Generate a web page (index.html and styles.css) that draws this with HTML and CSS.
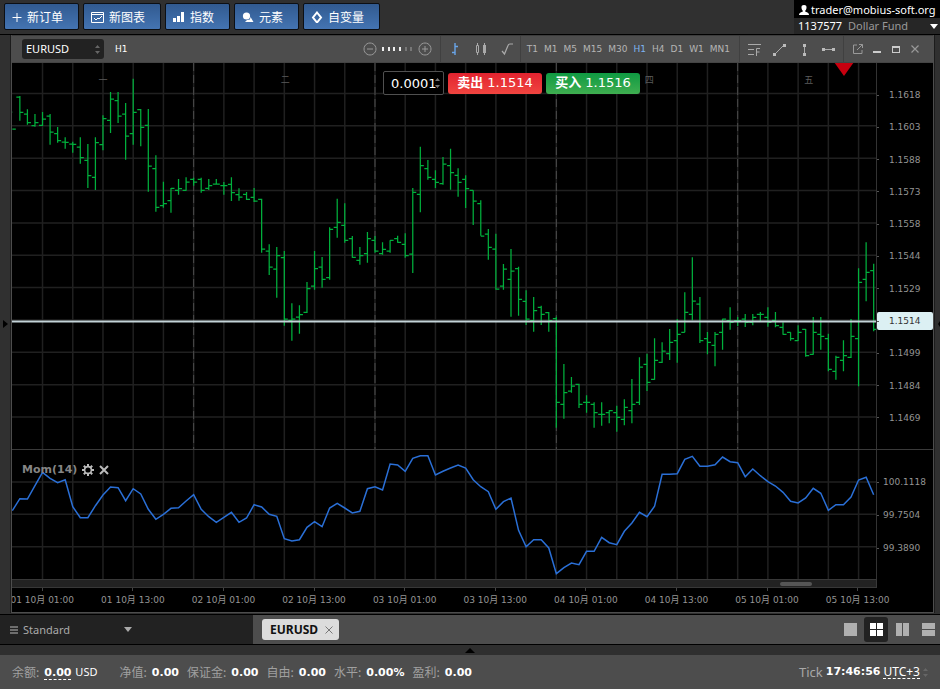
FILE: index.html
```html
<!DOCTYPE html>
<html lang="zh-CN">
<head>
<meta charset="utf-8">
<title>EURUSD H1</title>
<link rel="stylesheet" href="styles.css">
</head>
<body>
<header class="topbar">
  <nav class="actions">
    <button class="action"><svg width="10" height="12" viewBox="0 0 10 12"><path d="M5 2v9M0.500 6.500h9" stroke="#fff" fill="none"/></svg>新订单</button>
    <button class="action"><svg width="13" height="12" viewBox="0 0 13 12"><path d="M.5 1.500h12v10H.5zM.5 3.500h12M3 7l2 2 2-2 1 1 3-3" stroke="#fff" fill="none"/></svg>新图表</button>
    <button class="action"><svg width="12" height="12" viewBox="0 0 12 12"><path d="M0 7h3v4H0zM4 5h3v6H4zM8 1h3v10H8z" fill="#fff"/></svg>指数</button>
    <button class="action"><svg width="12" height="12" viewBox="0 0 12 12"><circle cx="4.500" cy="5" r="3.600" fill="#fff"/><path d="M8.500 6l3 5H3l2-2 3-.5z" fill="#fff"/></svg>元素</button>
    <button class="action"><svg width="12" height="12" viewBox="0 0 12 12"><path d="M6 1.500l4 5-4 5-4-5z" stroke="#fff" stroke-width="2" fill="none"/></svg>自变量</button>
  </nav>
  <div class="account">
    <div class="account-user"><svg width="10" height="10" viewBox="0 0 10 10"><path d="M5 0c2 0 2.800 1.200 2.500 3C7.300 4.500 6.500 5.500 6 6c0 1 4 1 4 4H0c0-3 4-3 4-4C3.500 5.500 2.700 4.500 2.500 3 2.200 1.200 3 0 5 0z" fill="#fff"/></svg><span>trader@mobius-soft.org</span></div>
    <button class="account-fund"><span class="account-id">1137577</span><span class="fund-name">Dollar Fund</span><svg width="8" height="5" viewBox="0 0 8 5"><path d="M0 0h8L4 5z" fill="#fff"/></svg></button>
  </div>
</header>

<main class="workspace">
  <button class="rail rail-left" aria-label="展开左侧面板"><svg width="5" height="8" viewBox="0 0 5 8"><path d="M0 0l5 4-5 4z" fill="#000"/></svg></button>
  <section class="window">
    <div class="toolbar">
      <span class="pick"><select class="symbol" aria-label="品种"><option>EURUSD</option></select><svg width="5" height="9" viewBox="0 0 5 9"><path d="M0 3l2.500-3L5 3zM0 6h5L2.500 9z" fill="#666"/></svg></span>
      <span class="period">H1</span>
      <div class="group group-zoom">
        <button class="tool" aria-label="缩小"><svg width="14" height="14" viewBox="0 0 14 14"><path d="M7 1a6 6 0 1 0 .010 0zM4 7h6" stroke="#999" fill="none"/></svg></button>
        <svg width="31" height="5" viewBox="0 0 31 5"><path d="M0 0h2v4H0zM6 0h2v4H6zM11 0h2v4h-2zM17 0h2v4h-2z" fill="#eee"/><path d="M23 0h2v4h-2zM28 0h2v4h-2z" fill="#777"/></svg>
        <button class="tool" aria-label="放大"><svg width="14" height="14" viewBox="0 0 14 14"><path d="M7 1a6 6 0 1 0 .010 0zM4 7h6M7 4v6" stroke="#999" fill="none"/></svg></button>
      </div>
      <div class="group group-type">
        <button class="tool" aria-label="柱状图"><svg width="14" height="14" viewBox="0 0 14 14"><path d="M7 1v12M4 10.500h3M7 4.500h3" stroke="#69a5e8" stroke-width="1.400" fill="none"/></svg></button>
        <button class="tool" aria-label="蜡烛图"><svg width="14" height="14" viewBox="0 0 14 14"><path d="M3.500 1v12M10.500 1v12" stroke="#aaa"/><path d="M2.500 3.500h2v7h-2z" stroke="#aaa" fill="#4d4d4d"/><path d="M9 3h3v8H9z" fill="#aaa"/></svg></button>
        <button class="tool" aria-label="折线图"><svg width="14" height="14" viewBox="0 0 14 14"><path d="M2 9l2.500 3L8 3.500Q8.500 2 10 2h3" stroke="#aaa" stroke-width="1.200" fill="none"/></svg></button>
      </div>
      <div class="group group-frames">
        <button class="frame">T1</button><button class="frame">M1</button><button class="frame">M5</button><button class="frame">M15</button><button class="frame">M30</button><button class="frame frame-on">H1</button><button class="frame">H4</button><button class="frame">D1</button><button class="frame">W1</button><button class="frame">MN1</button>
      </div>
      <div class="group group-draw">
        <button class="tool" aria-label="斐波那契"><svg width="14" height="14" viewBox="0 0 14 14"><path d="M1 2.500h13M1 7.500h6M1 12.500h6M9.500 14V6.500H13M9.500 10h3" stroke="#aaa" fill="none"/></svg></button>
        <button class="tool" aria-label="趋势线"><svg width="14" height="14" viewBox="0 0 14 14"><path d="M3 12L12 3" stroke="#aaa"/><path d="M1 11h3v3H1zM11 2h3v3h-3z" fill="#bbb"/></svg></button>
        <button class="tool" aria-label="垂直线"><svg width="14" height="14" viewBox="0 0 14 14"><path d="M7.500 3v10" stroke="#aaa"/><path d="M6 2h3v3H6zM6 11h3v3H6z" fill="#bbb"/></svg></button>
        <button class="tool" aria-label="水平线"><svg width="14" height="14" viewBox="0 0 14 14"><path d="M2 7.500h10" stroke="#aaa"/><path d="M0 6h3v3H0zM10 6h3v3h-3z" fill="#bbb"/></svg></button>
      </div>
      <div class="group group-window">
        <button class="tool" aria-label="弹出"><svg width="12" height="12" viewBox="0 0 12 12"><path d="M5 2H1.500v8.500H10V7M7 1.500h3.500V5M5 7l5.500-5.500" stroke="#999" fill="none"/></svg></button>
        <button class="tool" aria-label="最小化"><svg width="12" height="12" viewBox="0 0 12 12"><path d="M2 8h8v2H2z" fill="#ccc"/></svg></button>
        <button class="tool" aria-label="最大化"><svg width="12" height="12" viewBox="0 0 12 12"><path d="M2 3h8v7H2zM3 5v4h6V5z" fill="#ccc" fill-rule="evenodd"/></svg></button>
        <button class="tool" aria-label="关闭"><svg width="12" height="12" viewBox="0 0 12 12"><path d="M2.500 2.500l7 7M9.500 2.500l-7 7" stroke="#999" stroke-width="1.200"/></svg></button>
      </div>
    </div>

    <div class="chart">
      <div class="pane pane-price">
        <svg id="price" class="plot" viewBox="12 63 864 386" preserveAspectRatio="none"></svg>
        <ul class="scale">
          <li>1.1618</li><li>1.1603</li><li>1.1588</li><li>1.1573</li><li>1.1558</li><li>1.1544</li><li>1.1529</li><li class="last">1.1514</li><li>1.1499</li><li>1.1484</li><li>1.1469</li>
        </ul>
        <ol class="weekdays"><li>一</li><li>二</li><li></li><li>四</li><li>五</li></ol>
        <form class="ticket">
          <span class="volume"><input type="text" value="0.0001" aria-label="交易量"><svg width="5" height="10" viewBox="0 0 5 10"><path d="M0 3l2.500-3L5 3zM0 7h5l-2.500 3z" fill="#777"/></svg></span>
          <button type="button" class="deal sell"><b>卖出</b> 1.1514</button>
          <button type="button" class="deal buy"><b>买入</b> 1.1516</button>
        </form>
        <svg class="marker" width="20" height="14" viewBox="0 0 20 14"><path d="M0 0h20L10 14z" fill="#c8000f"/></svg>
      </div>
      <div class="pane pane-momentum">
        <svg id="momentum" class="plot" viewBox="12 450 864 129" preserveAspectRatio="none"></svg>
        <ul class="scale scale-wide"><li>100.1118</li><li>99.7504</li><li>99.3890</li></ul>
        <div class="indicator">
          <span>Mom(14)</span>
          <button class="tool" aria-label="设置"><svg width="12" height="12" viewBox="0 0 12 12"><circle cx="6" cy="6" r="3.400" stroke="#bbb" stroke-width="1.600" fill="none"/><path d="M6 0v2.500M6 9.500V12M0 6h2.500M9.500 6H12M1.800 1.800l1.700 1.700M8.500 8.500l1.700 1.700M10.200 1.800L8.500 3.500M3.500 8.500l-1.700 1.700" stroke="#bbb" stroke-width="2"/></svg></button>
          <button class="tool" aria-label="移除"><svg width="10" height="10" viewBox="0 0 10 10"><path d="M1 1l8 8M9 1L1 9" stroke="#bbb" stroke-width="2"/></svg></button>
        </div>
      </div>
      <div class="scroll"><span class="thumb"></span></div>
      <div class="timeline">
        <ol class="times"><li>01 10月 01:00</li><li>01 10月 13:00</li><li>02 10月 01:00</li><li>02 10月 13:00</li><li>03 10月 01:00</li><li>03 10月 13:00</li><li>04 10月 01:00</li><li>04 10月 13:00</li><li>05 10月 01:00</li><li>05 10月 13:00</li></ol>
      </div>
    </div>
  </section>
  <button class="rail rail-right" aria-label="展开右侧面板"><svg width="2" height="6" viewBox="0 0 2 6"><path d="M2 0v6L0 3z" fill="#000"/></svg></button>
</main>

<div class="tabs">
  <div class="layout">
    <svg width="8" height="8" viewBox="0 0 8 8"><path d="M0 1h8M0 4h8M0 7h8" stroke="#888" stroke-width="1.500"/></svg>
    <span class="pick layout-pick"><select aria-label="布局"><option>Standard</option></select><svg width="8" height="5" viewBox="0 0 8 5"><path d="M0 0h8L4 5z" fill="#aaa"/></svg></span>
  </div>
  <div class="tab"><b>EURUSD</b><button class="tool" aria-label="关闭标签"><svg width="8" height="8" viewBox="0 0 8 8"><path d="M.5.5l7 7M7.500.5l-7 7" stroke="#777"/></svg></button></div>
  <div class="tiling">
    <button aria-label="单窗口"><svg width="13" height="13" viewBox="0 0 13 13"><path d="M0 0h13v13H0z" fill="#b0b0b0"/></svg></button>
    <button class="on" aria-label="四宫格"><svg width="13" height="13" viewBox="0 0 13 13"><path d="M0 0h6v6H0zM7 0h6v6H7zM0 7h6v6H0zM7 7h6v6H7z" fill="#fff"/></svg></button>
    <button aria-label="垂直排列"><svg width="13" height="13" viewBox="0 0 13 13"><path d="M0 0h6v13H0zM7 0h6v13H7z" fill="#b0b0b0"/></svg></button>
    <button aria-label="水平排列"><svg width="13" height="13" viewBox="0 0 13 13"><path d="M0 0h13v6H0zM0 7h13v6H0z" fill="#b0b0b0"/></svg></button>
  </div>
</div>
<button class="splitter" aria-label="展开底部面板"><svg width="10" height="5" viewBox="0 0 10 5"><path d="M5 0l5 5H0z" fill="#000"/></svg></button>
<footer class="status">
  <dl class="totals">
    <div class="balance"><dt>余额:</dt><dd><b class="dashed">0.00</b> <span class="currency">USD</span></dd></div>
    <div><dt>净值:</dt><dd><b>0.00</b></dd></div>
    <div><dt>保证金:</dt><dd><b>0.00</b></dd></div>
    <div><dt>自由:</dt><dd><b>0.00</b></dd></div>
    <div><dt>水平:</dt><dd><b>0.00%</b></dd></div>
    <div><dt>盈利:</dt><dd><b>0.00</b></dd></div>
  </dl>
  <div class="clock"><span class="tick">Tick</span><b>17:46:56</b><button class="zone dashed">UTC+3</button><svg width="5" height="9" viewBox="0 0 5 9"><path d="M0 3l2.500-3L5 3zM0 6h5L2.500 9z" fill="#666"/></svg></div>
</footer>
<script src="chart.js"></script>
</body>
</html>
```
FILE: styles.css
```css
* { box-sizing: border-box; }
html, body { height: 100%; }
body {
  margin: 0;
  display: flex;
  flex-direction: column;
  background: #303030;
  color: #fff;
  font: 11px/14px "Noto Sans", "Noto Sans CJK SC", sans-serif;
  overflow: hidden;
}
button, input, select { font: inherit; color: inherit; margin: 0; padding: 0; border: 0; background: none; }
button { cursor: pointer; }
ul, ol, dl, dd { margin: 0; padding: 0; list-style: none; }
svg { display: block; flex: none; }

/* Top bar */
.topbar { flex: none; display: flex; justify-content: space-between; height: 35px; border-bottom: 1px solid #000; background: #303030; }
.actions { display: flex; gap: 4px; padding: 3px 4px 4px; }
.action {
  display: flex; align-items: center; gap: 5px; height: 27px; padding: 0 15px 0 7px;
  border: 1px solid #0c0f14; border-radius: 2px;
  background: linear-gradient(#315a90, #4474b2);
  font: 12px/16px "Noto Sans CJK SC", sans-serif;
}
.account { width: 146px; padding-top: 2px; background: #000; white-space: nowrap; }
.account-user { display: flex; align-items: center; gap: 2px; height: 16px; padding-left: 5px; }
.account-fund { display: flex; align-items: center; width: 100%; height: 16px; padding: 0 2px 0 4px; background: #262626; }
.fund-name { margin-left: 6px; margin-right: auto; color: #999; }

/* Workspace */
.workspace { flex: 1; min-height: 0; display: flex; padding-bottom: 1px; }
.rail { flex: none; display: flex; align-items: center; background: #303030; }
.rail-left { width: 11px; padding-left: 3px; border-right: 1px solid #1c1c1c; }
.rail-right { width: 6px; justify-content: flex-end; border-left: 1px solid #1c1c1c; }
.window { flex: 1; min-width: 0; display: flex; flex-direction: column; border: 1px solid #4d4d4d; border-top: 0; background: #000; }
.toolbar { flex: none; display: flex; align-items: center; height: 28px; padding-left: 10px; background: #4d4d4d; border-top: 1px solid #3c3c3c; border-bottom: 1px solid #444; }
.pick { position: relative; display: flex; align-items: center; }
.pick select { width: 100%; appearance: none; }
.pick svg { position: absolute; right: 4px; pointer-events: none; }
.symbol { height: 20px; padding: 0 4px; border-radius: 3px; background: #222; }
.toolbar .pick { width: 82px; }
.period { margin-left: 11px; font: 9px/14px "DejaVu Sans", sans-serif; }
.group { display: flex; align-items: center; height: 26px; border-left: 1px solid #404040; }
.tool { display: flex; align-items: center; justify-content: center; }
.group-zoom { margin-left: auto; gap: 5px; padding-right: 8px; border: 0; }
.group-type { gap: 12px; padding: 0 6px 0 7px; }
.group-frames { gap: 6px; padding: 0 9px 0 6px; }
.group-draw { gap: 11px; padding: 0 7px; }
.group-window { gap: 7px; padding: 0 12px 0 8px; }
.frame { font: 9px/14px "DejaVu Sans", sans-serif; color: #b5b5b5; }
.frame-on { color: #7db4f2; }

/* Chart */
.chart { flex: 1; min-height: 0; display: flex; flex-direction: column; overflow: hidden; }
.pane { position: relative; display: grid; grid-template-columns: minmax(0, 1fr) 56px; min-height: 0; }
.pane-price { flex: 386 1 0; }
.pane-momentum { flex: 129 1 0; border-top: 1px solid #3a3a3a; }
.plot { width: 100%; height: 100%; min-height: 0; border-right: 1px solid #333; }
.plot path { fill: none; vector-effect: non-scaling-stroke; }
.grid { stroke: #202020; stroke-width: 1.500; }
.days { stroke: #4c4c4c; stroke-dasharray: 8 4; }
.bars { stroke: #00b03c; stroke-width: 1.250; }
.level { stroke: #c3d3d8; stroke-width: 2; }
.line { stroke: #2a6fd6; stroke-width: 1.500; }
.scale {
  display: flex; flex-direction: column; justify-content: space-between; min-height: 0; padding: 25px 0 24px;
  font: 9px/14px "DejaVu Sans", sans-serif; color: #949494;
}
.scale li { display: flex; align-items: center; gap: 10px; height: 14px; }
.scale li::before { content: ""; width: 2px; height: 1px; background: #555; }
.scale-wide li { gap: 4px; }
.scale .last { height: 18px; margin: -2px 0; border-radius: 2px; background: #dcf0f3; color: #333; }
.weekdays {
  position: absolute; top: 10px; left: 0; right: 56px;
  display: grid; grid-template-columns: 24fr 24fr 24fr 24fr 18fr;
  text-align: center; font: 9px/14px "Noto Sans CJK SC", sans-serif; color: #5c5c5c;
}
.ticket { position: absolute; top: 8px; left: 371px; display: flex; align-items: center; gap: 4px; font: 13px/20px "DejaVu Sans", "Noto Sans CJK SC", sans-serif; }
.volume { position: relative; display: flex; align-items: center; }
.volume input { width: 61px; height: 24px; padding-left: 7px; border: 1px solid #505050; border-radius: 2px; background: #000; }
.volume svg { position: absolute; right: 4px; }
.deal { width: 94px; height: 21px; border-radius: 3px; white-space: nowrap; }
.sell { background: linear-gradient(#e2232f, #f04540); }
.buy { background: linear-gradient(#0f9a42, #3fae50); }
.marker { position: absolute; top: -1px; right: 79px; }
.indicator { position: absolute; top: 13px; left: 10px; display: flex; align-items: center; gap: 5px; font: bold 11px/14px "DejaVu Sans", sans-serif; color: #858585; }
.scroll { flex: none; display: flex; align-items: center; justify-content: flex-end; height: 9px; margin-right: 56px; padding-right: 64px; border: solid #383838; border-width: 1px 1px 1px 0; background: #222; }
.thumb { width: 32px; height: 4px; border-radius: 2px; background: #555; }
.timeline { flex: none; height: 24px; overflow: hidden; }
.times { display: flex; margin: 0 30px 0 -15px; font: 9px/14px "DejaVu Sans", "Noto Sans CJK SC", sans-serif; color: #949494; white-space: nowrap; }
.times li { flex: 1 0 0; display: flex; flex-direction: column; align-items: center; gap: 2px; }
.times li::before { content: ""; width: 1px; height: 3px; background: #444; }

/* Window tabs */
.tabs { flex: none; display: flex; height: 31px; border: solid #000; border-width: 1px 0; background: #4d4d4d; }
.layout { display: flex; align-items: center; gap: 5px; width: 253px; padding-left: 10px; background: #222; color: #aaa; }
.layout-pick { width: 113px; }
.tab { display: flex; align-items: center; gap: 7px; height: 21px; margin: 4px 0 0 9px; padding: 0 6px 0 8px; border-radius: 3px; background: #dcdcdc; color: #111; }
.tab b { font-size: 12px; }
.tiling { display: flex; align-items: center; gap: 2px; margin-left: auto; }
.tiling button { display: flex; align-items: center; justify-content: center; width: 24px; height: 25px; border-radius: 3px; }
.tiling .on { background: #222; }
.splitter { flex: none; display: flex; align-items: center; justify-content: center; height: 10px; background: #2f2f2f; }

/* Status bar */
.status { flex: none; display: flex; justify-content: space-between; height: 34px; padding: 0 12px; background: #4d4d4d; line-height: 16px; }
.totals, .totals div { display: flex; align-items: center; }
.totals { gap: 8px; }
.totals div { gap: 5px; }
.totals .balance { margin-right: 14px; }
.totals dt { font: 12px/16px "Noto Sans CJK SC", sans-serif; color: #a0a0a0; }
.status b { font: bold 11px/14px "DejaVu Sans", sans-serif; }
.dashed { border-bottom: 1px dashed #fff; }
.status .dashed { line-height: 12px; }
.currency { margin-left: 1px; }
.clock { display: flex; align-items: center; gap: 3px; }
.tick { font-size: 13px; color: #a8a8a8; }
.zone { font-size: 12px; }
```
FILE: chart.js
```js
// One bar per hour: [high, low, open, close] as chart ordinates.
const bars = [
  [129, 129, 112, 129], [96, 120.7, 97, 112.3], [109.3, 124.7, 114, 122.7], [114, 126.7, 125.7, 122.7],
  [112, 126, 125.3, 119], [114, 144.7, 116, 132], [127, 142.7, 133.7, 140.7], [137.3, 148.7, 142, 142.3],
  [141.7, 152.7, 144, 144.3], [137.3, 163.7, 147, 157.7], [144, 188, 160.3, 175.7], [137.3, 190, 177.3, 142.7],
  [115.3, 150.3, 144.7, 118.7], [92, 133, 120.3, 99], [92, 123, 100.7, 116], [103, 159.7, 114, 136],
  [78.7, 144.7, 133.7, 112.3], [109, 146.3, 109.5, 127.3], [109, 191.7, 125.3, 166], [155.3, 211.7, 168.7, 207.3],
  [181.7, 207.7, 205.7, 203.7], [188, 212.7, 200.7, 188.3], [179, 194.7, 190.3, 188.7], [177.3, 190.7, 190.3, 182],
  [177.7, 185.7, 179.3, 182], [177.7, 192.7, 179.3, 190.3], [179, 190, 188.3, 185.7], [179, 184.7, 184, 184],
  [182, 194.7, 185.7, 185.7], [177.3, 201, 184.3, 192.7], [188.3, 200.7, 194.7, 197], [192, 200, 194.3, 199.3],
  [188, 202, 197.3, 201], [198.7, 252.7, 199.3, 249], [244.3, 275, 251, 267], [247, 297.7, 269, 255.7],
  [251, 325.7, 257.7, 319], [303.3, 340.7, 320.3, 319], [305.3, 333.7, 317, 314.7], [282, 313, 312.3, 288.7],
  [251, 289.7, 286, 268.7], [257, 287.7, 267, 279.3], [227.3, 279.7, 277.7, 229.3], [198.7, 237.7, 227.3, 222.3],
  [203.3, 242.7, 225.3, 240.3], [236, 257.7, 238.7, 257.3], [247, 264.7, 260.3, 255.7], [232, 262.7, 253.7, 238.7],
  [236, 252.7, 240.3, 251], [242.3, 254.7, 253.7, 249.3], [240.3, 252.7, 251, 240.3], [235.7, 242.7, 238.7, 242.3],
  [233.3, 257.7, 244.3, 255.7], [188, 273, 254, 192.3], [146.7, 212.3, 194.3, 165.7], [160, 179.7, 168.7, 177.3],
  [170.3, 188, 179.3, 182.3], [157, 184.7, 183.7, 164], [148.7, 189.7, 165.7, 172.7], [168.3, 196.7, 175.3, 182.3],
  [175.3, 208, 179.3, 188.7], [190.3, 225, 190.3, 201], [200.3, 235.7, 203.7, 236], [229, 259.7, 234, 247.3],
  [233.7, 289.7, 249, 289], [264, 289.7, 286, 269], [249, 316.7, 279.3, 271], [266.7, 315.7, 268.7, 299.3],
  [290.3, 325, 301.3, 319], [297, 331.7, 320.7, 310.7], [305.7, 325, 307.3, 314.3], [312, 331.7, 312.7, 320.7],
  [316.7, 427.7, 318.7, 402.3], [364, 418.7, 404.3, 392.7], [377, 392.7, 391, 386], [383.7, 408, 384.3, 404.3],
  [395.3, 412.7, 402.3, 402.3], [402.3, 427.7, 404.3, 412.7], [402.3, 425.7, 414.3, 414.3], [410.3, 423.3, 412.7, 410.7],
  [405.7, 431.7, 412.7, 417.3], [399.3, 425.3, 419.3, 407.3], [379, 423.3, 410.7, 404.3], [357.3, 405, 402.3, 367],
  [353.7, 391, 364.3, 382.3], [338.3, 379.7, 379.3, 360.3], [342.3, 363, 362.3, 351], [329, 360, 353.7, 342.3],
  [319, 362.7, 340.7, 334.3], [292.3, 332.3, 332.3, 312.3], [257.3, 320.3, 314.3, 301], [297, 343, 304, 340.7],
  [332, 354.3, 338.7, 342.3], [332, 366.3, 345.3, 334.3], [318.7, 349.7, 332.3, 319], [307.3, 329.7, 320.7, 322.3],
  [317, 326, 320.7, 320.7], [314, 327, 319, 322.3], [314, 325.3, 322.3, 317.3], [312, 321, 314.3, 314.3],
  [307.3, 326.7, 317.3, 322.3], [312, 327.3, 320.3, 325.7], [322.3, 334.7, 327.3, 334.3], [332.3, 340.7, 332.3, 338.7],
  [325.3, 341, 340.7, 332.3], [329, 356.7, 329.3, 355.7], [317, 354.7, 354.3, 332.3], [317, 349.7, 334.3, 336.3],
  [333.7, 371.3, 338.7, 369.3], [355.7, 379.7, 371.3, 357.3], [340.3, 371.3, 360.3, 355.7], [319, 358, 357.3, 336.3],
  [268.3, 386.3, 338.7, 282.3], [242.3, 301.3, 279.3, 272.3], [263.7, 331.3, 270.7, 329.3]
];

const momentum = [
  510.7, 498.7, 499, 485.7, 472.3, 478.3, 482.7, 479.7, 506.7, 517.7, 517.7, 505.7, 495, 487, 487.7, 500.7,
  488.7, 494, 509.3, 519.3, 514.3, 508.3, 507.7, 501, 494.7, 509.3, 516.7, 522.3, 517.3, 512.3, 522.3, 518,
  504.7, 507, 514.3, 516.3, 538.7, 541, 539.7, 527.3, 521.7, 526.7, 508, 503.3, 508, 513, 511.3, 488.7,
  486.7, 490, 464, 465, 471.3, 458.3, 455.7, 455.7, 475, 471.3, 468, 465, 468, 479.7, 486.7, 491.7,
  509.3, 501.7, 498, 530.3, 546.7, 539.7, 539.7, 548, 573.7, 567.7, 563, 564.7, 551.3, 551.3, 537.3, 542.7,
  544.7, 531.3, 523, 512.3, 516.7, 506.3, 474.3, 474.3, 473.7, 459.3, 456.3, 466.3, 466.3, 464.7, 457, 461.7,
  462.7, 476.7, 469, 475.7, 481.7, 486, 492.3, 501.3, 503, 498, 488.3, 493.3, 510.3, 504.7, 504.7, 497,
  480, 477.3, 494.7
];

const barX = i => 12.3 + i * 7.556;

function addPath(svg, className, d) {
  const path = document.createElementNS("http://www.w3.org/2000/svg", "path");
  path.setAttribute("class", className);
  path.setAttribute("d", d);
  svg.appendChild(path);
}

function drawGrid(svg, top, bottom, rows) {
  let d = "";
  for (let i = 4; i < bars.length; i += 4) d += `M${barX(i)} ${top}V${bottom}`;
  for (const y of rows) d += `M12 ${y}H876`;
  addPath(svg, "grid", d);
}

const price = document.getElementById("price");
drawGrid(price, 63, 449, Array.from({ length: 11 }, (_, i) => 93.5 + i * 32.35));
addPath(price, "days", [24, 48, 72, 96].map(i => `M${barX(i)} 63V449`).join(""));
addPath(price, "bars", bars.map(([high, low, open, close], i) => {
  const x = barX(i);
  return `M${x} ${high}V${low}M${x - 3.5} ${open}H${x}M${x} ${close}H${x + 3.5}`;
}).join(""));
addPath(price, "level", "M12 321.5H876");

const lower = document.getElementById("momentum");
drawGrid(lower, 450, 579, [482, 514.3, 546.7]);
addPath(lower, "line", "M" + momentum.map((y, i) => `${barX(i)} ${y}`).join("L"));
```
